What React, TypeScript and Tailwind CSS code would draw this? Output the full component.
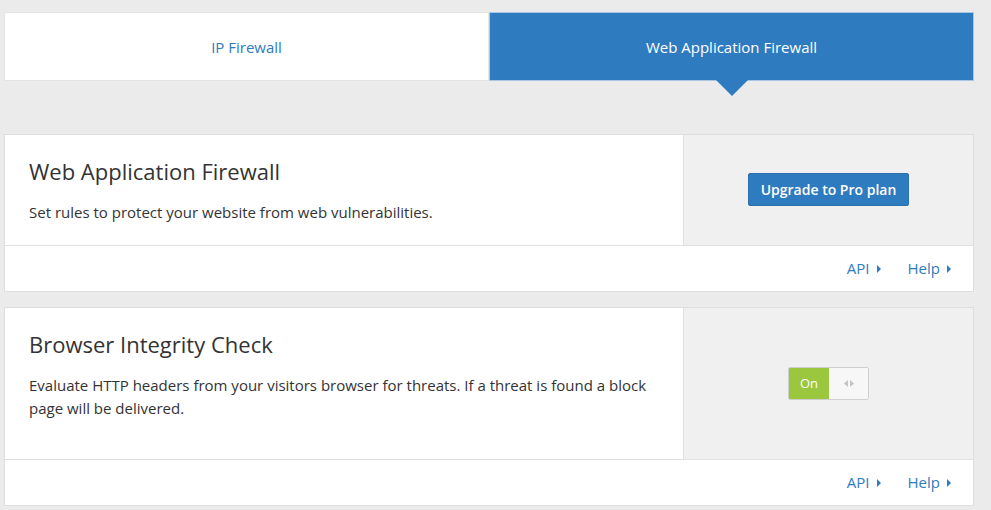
import React from "react";

const font = { fontFamily: '"Open Sans", "Noto Sans", sans-serif' };

function Caret() {
  return (
    <svg width="5" height="8" viewBox="0 0 5 8" className="ml-[7px] inline-block">
      <path d="M0 0 L4 4 L0 8 Z" fill="#2f7bbf" />
    </svg>
  );
}

function CardFooter() {
  return (
    <div className="flex h-[46px] items-center justify-end gap-[26px] border-t border-[#e0e0e0] bg-white pr-[21px] text-[15px] text-[#2f7bbf]">
      <a className="flex items-center">
        API
        <Caret />
      </a>
      <a className="flex items-center">
        Help
        <Caret />
      </a>
    </div>
  );
}

function Card({
  title,
  description,
  height,
  children,
}: {
  title: string;
  description: string;
  height: string;
  children: React.ReactNode;
}) {
  return (
    <div className="border border-[#dedede] bg-white">
      <div className={`flex ${height}`}>
        <div className="flex-1 px-[24px] pt-[21px]">
          <h2 className="text-[22px] leading-[30px] text-[#333]">{title}</h2>
          <p className="mt-[15px] text-[15px] leading-[23px] text-[#333]">{description}</p>
        </div>
        <div className="flex w-[290px] items-center justify-center border-l border-[#e0e0e0] bg-[#f0f0f0]">
          {children}
        </div>
      </div>
      <CardFooter />
    </div>
  );
}

export default function App() {
  return (
    <div className="min-h-[510px] bg-[#ebebeb] pt-[12px] pl-[4px] pr-[17px]" style={font}>
      <div className="flex h-[69px]">
        <button className="flex-1 border border-[#e4e4e4] bg-white pt-[1px] text-[15px] text-[#2f7bbf]">
          IP Firewall
        </button>
        <button className="relative flex-1 border border-[#a9c6e4] bg-[#2f7bbf] pt-[1px] text-[15px] text-white">
          Web Application Firewall
          <span className="absolute left-1/2 top-full -translate-x-1/2 border-x-[16px] border-t-[16px] border-x-transparent border-t-[#2f7bbf]" />
        </button>
      </div>

      <div className="mt-[53px] flex flex-col gap-[15px]">
        <Card
          title="Web Application Firewall"
          description="Set rules to protect your website from web vulnerabilities."
          height="h-[110px]"
        >
          <button className="-mt-[1px] h-[33px] w-[161px] rounded-[2px] border border-[#2a70ae] bg-[#2f7bbf] text-[14px] font-semibold text-white">
            Upgrade to Pro plan
          </button>
        </Card>
        <Card
          title="Browser Integrity Check"
          description="Evaluate HTTP headers from your visitors browser for threats. If a threat is found a block page will be delivered."
          height="h-[151px]"
        >
          <div className="flex h-[33px] w-[81px] overflow-hidden rounded-[2px] border border-[#cfcfcf]">
            <div className="flex w-[40px] items-center justify-center bg-[#9ac73e] text-[13px] text-white">On</div>
            <div className="flex flex-1 items-center justify-center gap-[2px] bg-[#f7f7f7]">
              <svg width="4" height="7" viewBox="0 0 4 7">
                <path d="M4 0 L0 3.5 L4 7 Z" fill="#c4c4c4" />
              </svg>
              <svg width="4" height="7" viewBox="0 0 4 7">
                <path d="M0 0 L4 3.5 L0 7 Z" fill="#c4c4c4" />
              </svg>
            </div>
          </div>
        </Card>
      </div>
    </div>
  );
}
